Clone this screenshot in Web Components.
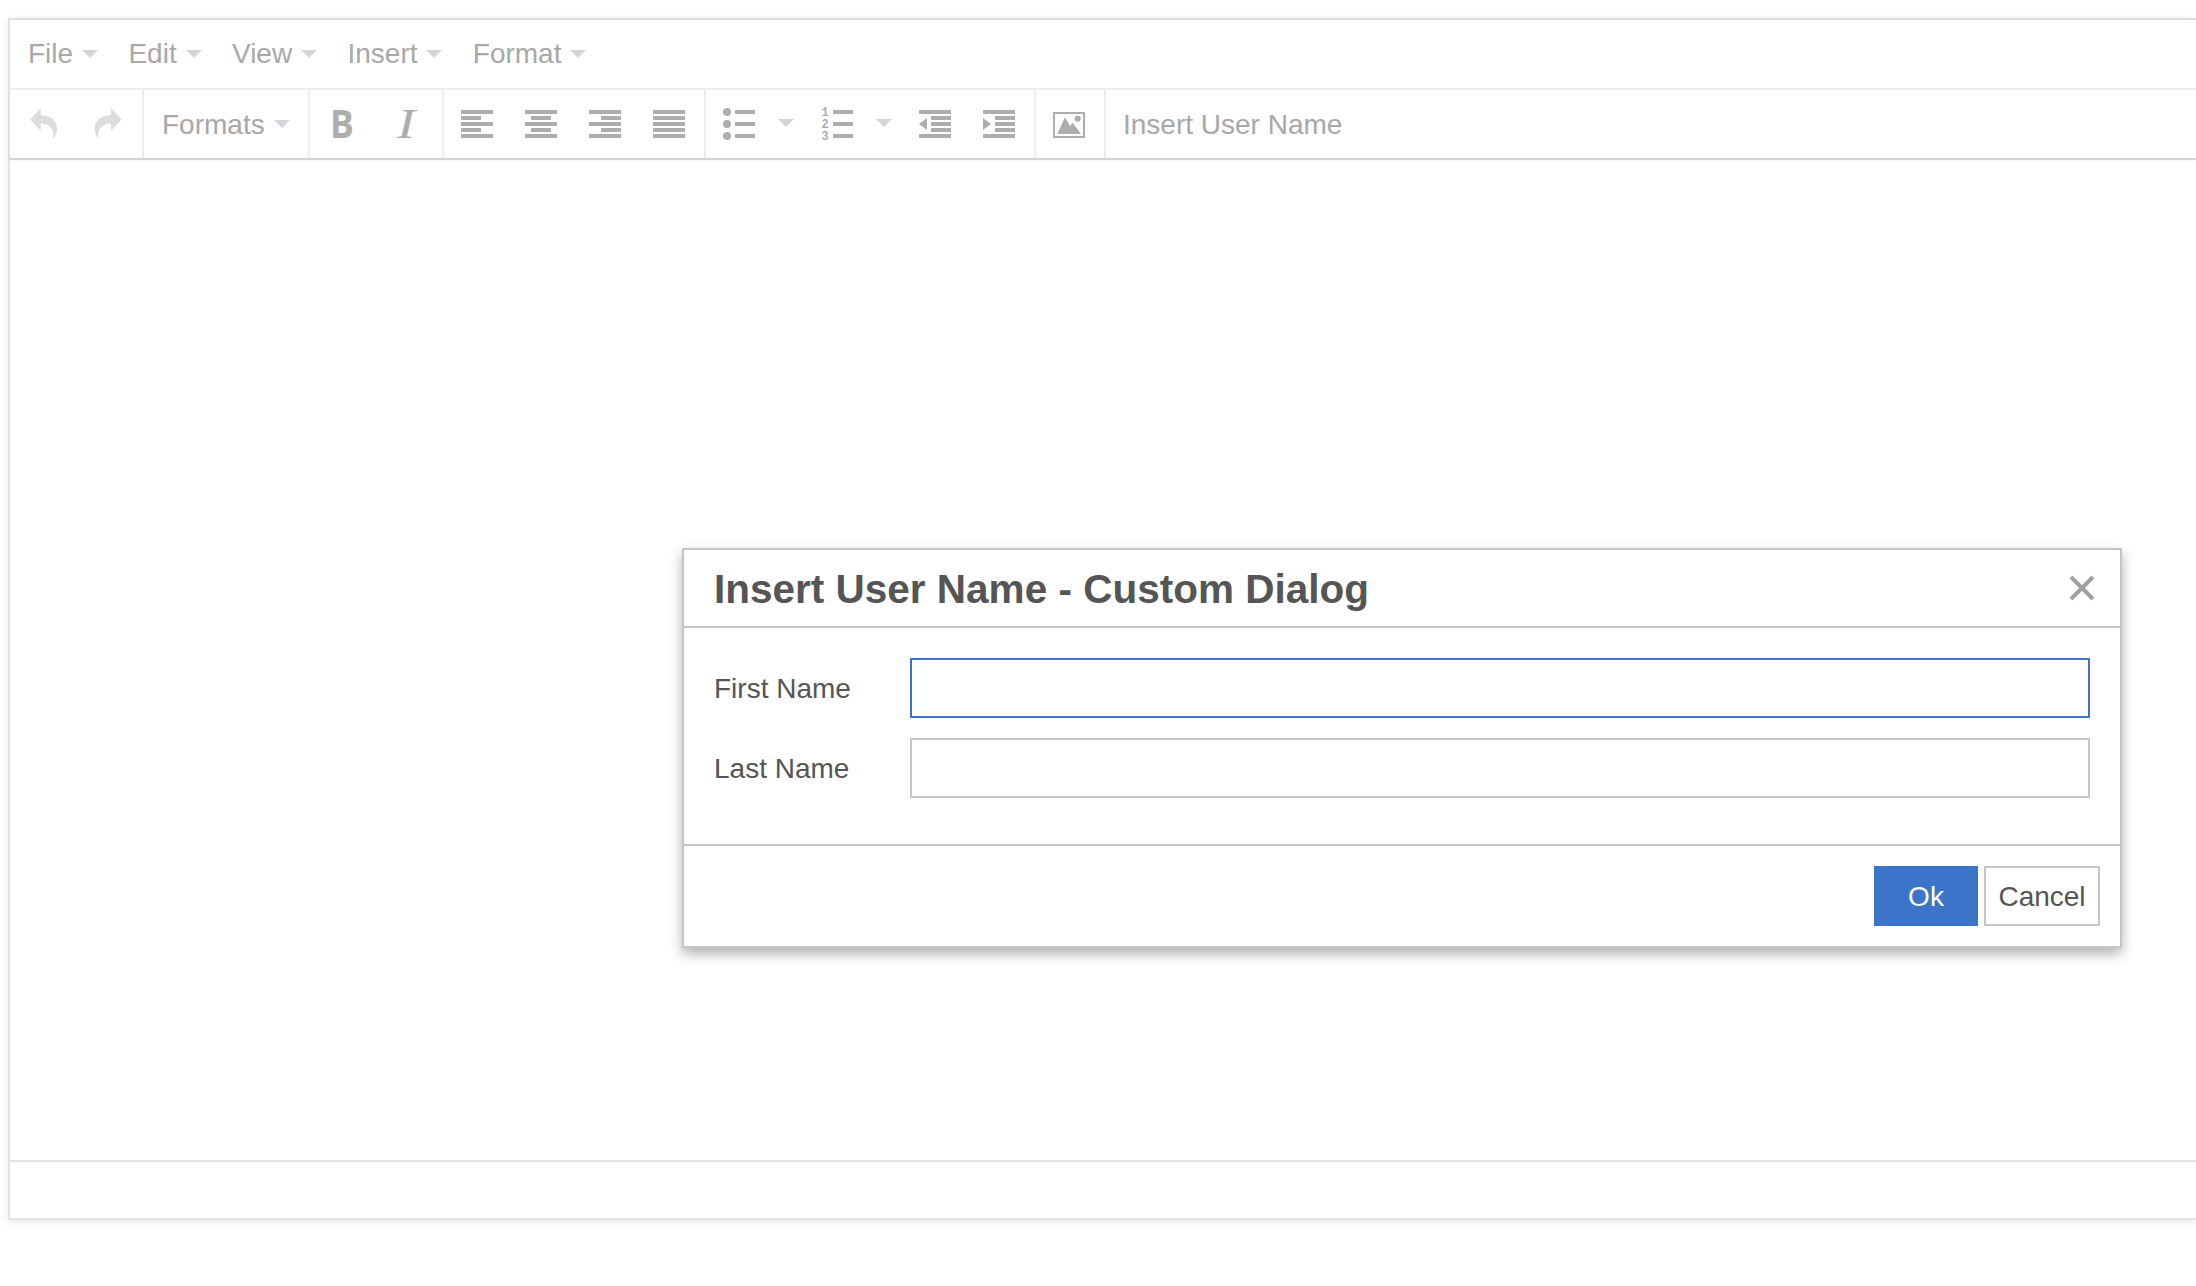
<!doctype html>
<html>
<head>
<meta charset="utf-8">
<title>Custom Dialog</title>
<style>
    html, body {
        margin: 0;
        height: 100%;
        background: #fff;
        overflow: hidden;
    }

    body {
        font-family: "Liberation Sans", Arial, sans-serif;
        padding: 18px 0 0 8px;
        box-sizing: border-box;
    }
</style>
</head>
<body>
<tiny-editor>
    <tiny-menubar slot="menubar">
        <menu-item>File</menu-item>
        <menu-item>Edit</menu-item>
        <menu-item>View</menu-item>
        <menu-item>Insert</menu-item>
        <menu-item>Format</menu-item>
    </tiny-menubar>
    <tiny-toolbar slot="toolbar">
        <tool-group>
            <tool-icon name="undo"></tool-icon>
            <tool-icon name="redo"></tool-icon>
        </tool-group>
        <tool-group text>
            <menu-item style="--caret-top: -2px">Formats</menu-item>
        </tool-group>
        <tool-group>
            <tool-icon name="bold"></tool-icon>
            <tool-icon name="italic"></tool-icon>
        </tool-group>
        <tool-group>
            <tool-icon name="alignleft"></tool-icon>
            <tool-icon name="aligncenter"></tool-icon>
            <tool-icon name="alignright"></tool-icon>
            <tool-icon name="alignjustify"></tool-icon>
        </tool-group>
        <tool-group>
            <tool-icon name="bullist" wide></tool-icon>
            <tool-icon name="numlist" wide></tool-icon>
            <tool-icon name="outdent"></tool-icon>
            <tool-icon name="indent"></tool-icon>
        </tool-group>
        <tool-group>
            <tool-icon name="image"></tool-icon>
        </tool-group>
        <tool-group last>
            <span class="plain">Insert User Name</span>
        </tool-group>
    </tiny-toolbar>
</tiny-editor>
<custom-dialog heading="Insert User Name - Custom Dialog">
    <form-row label="First Name" focused></form-row>
    <form-row label="Last Name"></form-row>
    <dialog-button slot="footer" primary>Ok</dialog-button>
    <dialog-button slot="footer">Cancel</dialog-button>
</custom-dialog>

<script>
const define = (name, css, html, extra) => {
    const template = document.createElement('template')
    template.innerHTML = `<style>${css}</style>${html}`
    customElements.define(name, class extends HTMLElement {
        constructor() {
            super()
            this.attachShadow({ mode: 'open' }).appendChild(template.content.cloneNode(true))
        }
        connectedCallback() {
            if (extra) extra.call(this, this.shadowRoot)
        }
    })
}

define('tiny-editor', `
    :host {
        display: flex;
        flex-direction: column;
        width: 2188px;
        height: 1202px;
        box-sizing: border-box;
        border: 2px solid #e2e2e2;
        border-right: 0;
        border-top-color: #dcdcdc;
        background: #fff;
        box-shadow: 0 2px 8px rgba(0, 0, 0, 0.1);
    }
    #edit { flex: 1; }
    #status {
        height: 56px;
        border-top: 2px solid #e2e2e2;
    }
`, `
    <slot name="menubar"></slot>
    <slot name="toolbar"></slot>
    <div id="edit"></div>
    <div id="status"></div>
`)

define('tiny-menubar', `
    :host {
        display: flex;
        height: 70px;
        box-sizing: border-box;
        padding-left: 18px;
        padding-top: 17px;
        gap: 30.3px;
        border-bottom: 2px solid #eeeeee;
    }
`, `<slot></slot>`)

define('menu-item', `
    :host {
        display: inline-flex;
        align-items: center;
        height: 34px;
        font-size: 28px;
        color: #a8a8a8;
    }
    i {
        display: block;
        margin-left: 9px;
        margin-top: var(--caret-top, 0);
        border: 8px solid transparent;
        border-top-color: #d2d6da;
        border-bottom: 0;
    }
`, `<slot></slot><i></i>`)

define('tiny-toolbar', `
    :host {
        display: flex;
        height: 70px;
        box-sizing: border-box;
        border-bottom: 2px solid #d4d4d4;
        box-shadow: 0 1px 3px rgba(0, 0, 0, 0.05);
    }
`, `<slot></slot>`)

define('tool-group', `
    :host {
        display: flex;
        box-sizing: border-box;
        padding: 0 3px 0 1px;
        border-right: 2px solid #eeeeee;
    }
    :host([text]) {
        width: 166px;
        padding: 18px 0 0 18px;
    }
    :host([last]) {
        border-right: 0;
        padding: 18px 0 0 17px;
    }
    ::slotted(.plain) {
        font-size: 28px;
        line-height: 34px;
        color: #a8a8a8;
    }
`, `<slot></slot>`)

// cell coordinates: 64 or 98 wide, 68 high, glyph box starts at x 16
const caret = `<path d="M71 29h16l-8 8z" fill="#d2d6da"/>`
const rows = (ws, off) => ws.map((w, i) => `<rect x="${16 + (off ? off[i] : 0)}" y="${20 + i * 6}" width="${w}" height="4"/>`).join('')
const listLines = `<rect x="28" y="20" width="20" height="4"/><rect x="28" y="32" width="20" height="4"/><rect x="28" y="44" width="20" height="4"/>`
const digit = (n, y) => `<text x="16.5" y="${y}" font-family="Liberation Mono, monospace" font-weight="700" font-size="12">${n}</text>`
const indentRows = rows([32]) + `<rect x="28" y="26" width="20" height="4"/><rect x="28" y="32" width="20" height="4"/><rect x="28" y="38" width="20" height="4"/><rect x="16" y="44" width="32" height="4"/>`

const icons = {
    undo: `<path fill="#dcdcdc" d="M19 29.5L29.7 18.3V25C39 25.5 46 30 46 39C46 43 44 47 41.7 49.3C43.5 43 42 34 29.7 33.3V40.7Z"/>`,
    redo: `<path fill="#dcdcdc" d="M46.7 29.5L36 18.3V25C26.7 25.5 19.7 30 19.7 39C19.7 43 21.7 47 24 49.3C22.2 43 23.7 34 36 33.3V40.7Z"/>`,
    bold: `<text transform="translate(19 47.7) scale(.92 1)" font-family="Open Sans, sans-serif" font-weight="700" font-size="38.5">B</text>`,
    italic: `<text transform="translate(22 47.7) scale(1.3 1)" font-family="Liberation Serif, serif" font-style="italic" font-size="42">I</text>`,
    alignleft: rows([32, 20, 32, 20, 32]),
    aligncenter: rows([32, 20, 32, 20, 32], [0, 6, 0, 6, 0]),
    alignright: rows([32, 20, 32, 20, 32], [0, 12, 0, 12, 0]),
    alignjustify: rows([32, 32, 32, 32, 32]),
    bullist: `<circle cx="20" cy="22" r="4"/><circle cx="20" cy="34" r="4"/><circle cx="20" cy="46" r="4"/>${listLines}${caret}`,
    numlist: digit(1, 26) + digit(2, 38) + digit(3, 50) + listLines + caret,
    outdent: indentRows + `<path d="M16 34l8-6v12z"/>`,
    indent: indentRows + `<path d="M24 34l-8-6v12z"/>`,
    image: `<path fill-rule="evenodd" d="M16 22h32v26H16zM18 24v22h28V24z"/><circle cx="40.7" cy="28.7" r="3"/><path d="M20.3 44L28 27.3 33 36 35.7 32.7 44 44z"/>`
}

define('tool-icon', `
    :host {
        display: block;
        width: 64px;
        height: 68px;
    }
    :host([wide]) { width: 98px; }
    svg { display: block; fill: #adadad; }
`, `<svg height="68"></svg>`, function (root) {
    const svg = root.querySelector('svg')
    svg.setAttribute('width', this.hasAttribute('wide') ? 98 : 64)
    svg.innerHTML = icons[this.getAttribute('name')]
})

define('custom-dialog', `
    :host {
        position: absolute;
        left: 682px;
        top: 548px;
        width: 1440px;
        box-sizing: border-box;
        display: block;
        background: #fff;
        border: 2px solid #c5c5c5;
        box-shadow: 0 6px 12px rgba(0, 0, 0, 0.3);
        color: #555;
    }
    header {
        display: flex;
        align-items: center;
        justify-content: space-between;
        height: 76px;
        padding: 0 25px 0 30px;
        border-bottom: 2px solid #c5c5c5;
    }
    h1 {
        margin: 2px 0 0;
        font-size: 40.5px;
        font-weight: 700;
        color: #555;
    }
    #body {
        display: flex;
        flex-direction: column;
        gap: 20px;
        padding: 30px 30px 46px;
        border-bottom: 2px solid #c5c5c5;
    }
    footer {
        display: flex;
        justify-content: flex-end;
        gap: 6px;
        padding: 20px 20px 20px;
    }
    svg { display: block; margin-top: -1px; }
`, `
    <header>
        <h1></h1>
        <svg width="26" height="26" viewBox="0 0 26 26"><path d="M2 2l22 22M24 2L2 24" stroke="#a0a0a0" stroke-width="4"/></svg>
    </header>
    <div id="body"><slot></slot></div>
    <footer><slot name="footer"></slot></footer>
`, function (root) {
    root.querySelector('h1').textContent = this.getAttribute('heading')
})

define('form-row', `
    :host {
        display: flex;
        align-items: center;
    }
    label {
        width: 196px;
        padding-top: 1px;
        font-size: 28px;
        color: #555;
    }
    div {
        flex: 1;
        height: 60px;
        box-sizing: border-box;
        border: 2px solid #c5c5c5;
    }
    :host([focused]) div { border-color: #3b74c9; }
`, `<label></label><div></div>`, function (root) {
    root.querySelector('label').textContent = this.getAttribute('label')
})

define('dialog-button', `
    :host {
        display: flex;
        align-items: center;
        justify-content: center;
        height: 60px;
        box-sizing: border-box;
        width: 116px;
        padding-top: 1px;
        font-size: 28px;
        color: #555;
        border: 2px solid #c5c5c5;
        background: #fff;
    }
    :host([primary]) {
        width: 104px;
        border: 0;
        background: #3b74c9;
        color: #fff;
    }
`, `<slot></slot>`)
</script>
</body>
</html>
